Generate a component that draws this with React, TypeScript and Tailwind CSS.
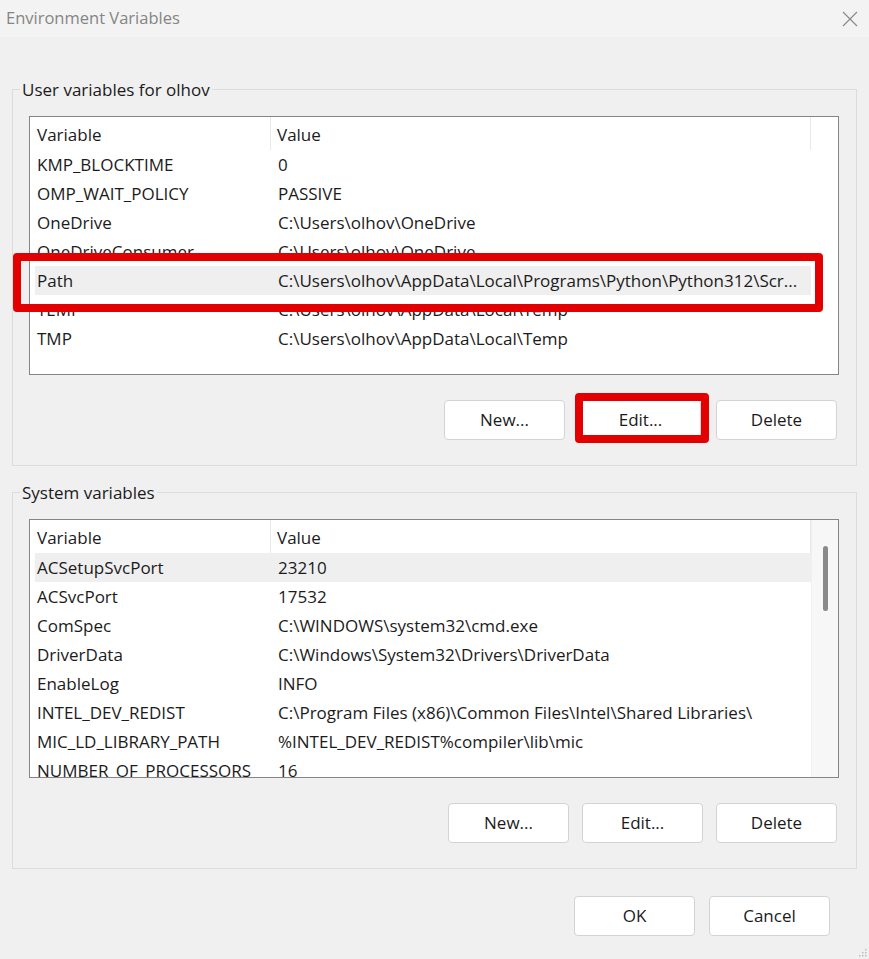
import type { ReactNode } from "react";

type Row = { name: string; value: string };

const userVars: Row[] = [
  { name: "KMP_BLOCKTIME", value: "0" },
  { name: "OMP_WAIT_POLICY", value: "PASSIVE" },
  { name: "OneDrive", value: "C:\\Users\\olhov\\OneDrive" },
  { name: "OneDriveConsumer", value: "C:\\Users\\olhov\\OneDrive" },
  { name: "Path", value: "C:\\Users\\olhov\\AppData\\Local\\Programs\\Python\\Python312\\Scr..." },
  { name: "TEMP", value: "C:\\Users\\olhov\\AppData\\Local\\Temp" },
  { name: "TMP", value: "C:\\Users\\olhov\\AppData\\Local\\Temp" },
];

const systemVars: Row[] = [
  { name: "ACSetupSvcPort", value: "23210" },
  { name: "ACSvcPort", value: "17532" },
  { name: "ComSpec", value: "C:\\WINDOWS\\system32\\cmd.exe" },
  { name: "DriverData", value: "C:\\Windows\\System32\\Drivers\\DriverData" },
  { name: "EnableLog", value: "INFO" },
  { name: "INTEL_DEV_REDIST", value: "C:\\Program Files (x86)\\Common Files\\Intel\\Shared Libraries\\" },
  { name: "MIC_LD_LIBRARY_PATH", value: "%INTEL_DEV_REDIST%compiler\\lib\\mic" },
  { name: "NUMBER_OF_PROCESSORS", value: "16" },
];

function Button({ children }: { children: ReactNode }) {
  return (
    <button className="w-[121px] h-[40px] bg-white border border-[#d3d3d3] rounded-[4px] text-[17px] text-[#1b1b1b] flex items-center justify-center">
      {children}
    </button>
  );
}

function VarList({ rows, selected, scrollbar }: { rows: Row[]; selected: number; scrollbar?: boolean }) {
  return (
    <div className="relative h-[259px] w-[810px] bg-white border border-[#858585] overflow-hidden flex">
      <div className="w-[781px] pl-[5px] flex flex-col">
        {/* header */}
        <div className="h-[33px] flex shrink-0">
          <div className="w-[236px] h-full pl-[2px] pt-[2px] flex items-center border-r border-[#e8e8e8]">Variable</div>
          <div className="flex-1 h-full pl-[6px] pt-[2px] flex items-center border-r border-[#e8e8e8]">Value</div>
        </div>
        {rows.map((r, i) => (
          <div
            key={r.name}
            className={`h-[29px] shrink-0 flex items-center whitespace-nowrap ${i === selected ? "bg-[#efefef]" : ""}`}
          >
            <div className="w-[243px] pl-[2px]">{r.name}</div>
            <div className="flex-1">{r.value}</div>
          </div>
        ))}
      </div>
      {scrollbar && (
        <div className="w-[27px] h-full bg-[#f7f7f7] border-l border-[#f0f0f0] pt-[26px] flex justify-center">
          <div className="w-[5px] h-[65px] rounded-full bg-[#8a8a8a]" />
        </div>
      )}
    </div>
  );
}

function Group({ title, children }: { title: string; children: ReactNode }) {
  return (
    <fieldset className="border border-[#dcdcdc] pl-[16px] pr-[17px] pb-[25px] w-[845px]">
      <legend className="-ml-[9px] px-[2px] text-[17px] leading-[23px]">{title}</legend>
      {children}
    </fieldset>
  );
}

export default function App() {
  return (
    <div
      className="relative w-[869px] h-[959px] bg-[#f0f0f0] overflow-hidden text-[#1b1b1b] text-[17px]"
      style={{ fontFamily: '"Open Sans", "Noto Sans", sans-serif' }}
    >
      {/* title bar */}
      <div className="h-[37px] bg-[#f3f3f3] flex items-center justify-between pl-[6px] pr-[11px]">
        <span className="text-[16.5px] text-[#858585]">Environment Variables</span>
        <svg width="16" height="16" viewBox="0 0 16 16" className="text-[#8a8a8a]">
          <path d="M1 1 L15 15 M15 1 L1 15" stroke="currentColor" strokeWidth="1.2" fill="none" />
        </svg>
      </div>

      <div className="px-[12px] pt-[41px] flex flex-col">
        <Group title="User variables for olhov">
          <div className="mt-[15px]">
            <VarList rows={userVars} selected={4} />
          </div>
          <div className="mt-[25px] flex justify-end gap-[15px] pr-[2px]">
            <Button>New...</Button>
            <Button>Edit...</Button>
            <Button>Delete</Button>
          </div>
        </Group>

        <div className="mt-[15px]">
          <Group title="System variables">
            <div className="mt-[15px]">
              <VarList rows={systemVars} selected={0} scrollbar />
            </div>
            <div className="mt-[25px] flex justify-end gap-[13px] pr-[2px]">
              <Button>New...</Button>
              <Button>Edit...</Button>
              <Button>Delete</Button>
            </div>
          </Group>
        </div>

        <div className="mt-[27px] flex justify-end gap-[14px] pr-[27px]">
          <Button>OK</Button>
          <Button>Cancel</Button>
        </div>
      </div>

      {/* red annotation boxes */}
      <div className="absolute left-[13px] top-[253px] w-[810px] h-[59px] border-[8px] border-[#e30000] rounded-[4px]" />
      <div className="absolute left-[575px] top-[393px] w-[134px] h-[50px] border-[8px] border-[#e30000] rounded-[4px]" />

      {/* resize grip */}
      <svg className="absolute right-[2px] bottom-[2px]" width="8" height="8" viewBox="0 0 8 8">
        <rect x="6" y="0" width="1.5" height="1.5" fill="#bdbdbd" />
        <rect x="3" y="3" width="1.5" height="1.5" fill="#bdbdbd" />
        <rect x="6" y="3" width="1.5" height="1.5" fill="#bdbdbd" />
        <rect x="0" y="6" width="1.5" height="1.5" fill="#bdbdbd" />
        <rect x="3" y="6" width="1.5" height="1.5" fill="#bdbdbd" />
        <rect x="6" y="6" width="1.5" height="1.5" fill="#bdbdbd" />
      </svg>
    </div>
  );
}
